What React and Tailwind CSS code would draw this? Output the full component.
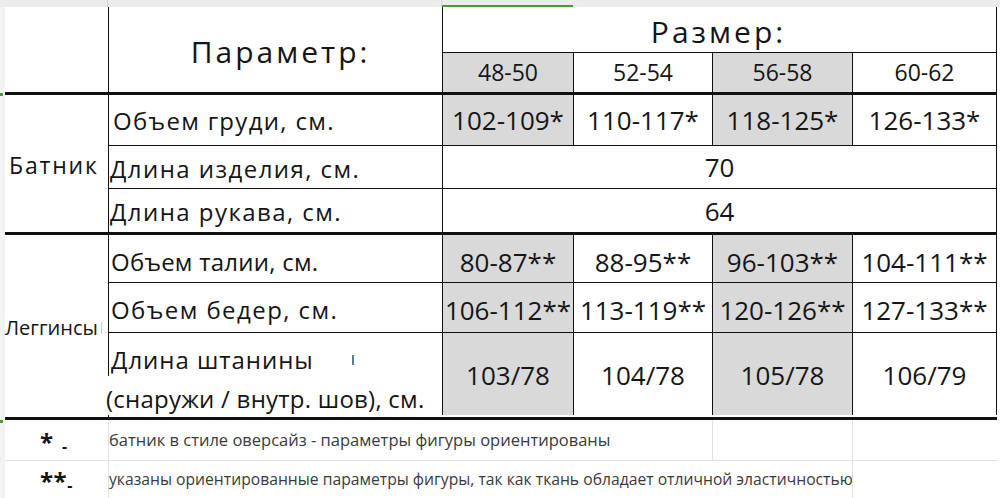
const font = { fontFamily: '"Open Sans", "Noto Sans", sans-serif' };

const sizeCols = [
  { w: 'w-[131px]', gray: true },
  { w: 'w-[139px]', gray: false },
  { w: 'w-[140px]', gray: true },
  { w: 'w-[144px]', gray: false },
];

function ValueRow({ values, h, border = true, align = 'items-center', text = 'text-[26px]' }) {
  return (
    <div className={`flex ${h}`}>
      {sizeCols.map((c, i) => (
        <div
          key={i}
          className={`${c.w} ${c.gray ? 'bg-[#d9d9d9]' : 'bg-white'} ${border ? 'border-b' : ''} border-r border-[#111] flex justify-center ${align} ${text} leading-none text-[#151515] whitespace-nowrap`}
        >
          {values[i]}
        </div>
      ))}
    </div>
  );
}

function LabelCell({ children, h, border = true, className = '' }) {
  return (
    <div className={`w-[334px] ${h} ${border ? 'border-b' : ''} border-r border-[#111] flex items-center text-[24px] leading-none text-[#151515] whitespace-nowrap ${className}`}>
      {children}
    </div>
  );
}

export default function App() {
  return (
    <div className="w-[1000px] h-[498px] bg-white overflow-hidden" style={font}>
      {/* spreadsheet column header strip */}
      <div className="h-[7px] flex bg-[#ececec]">
        <div className="w-[108px] border-r border-[#d4d4d4]" />
        <div className="w-[334px] border-r border-[#d4d4d4]" />
        <div className="w-[131px] flex flex-col justify-end">
          <div className="h-[2px] bg-[#4f9a35]" />
        </div>
      </div>

      <div className="flex">
        <div className="w-[5px] bg-[#f2f2f2] flex flex-col">
          <div className="h-[86px]" />
          <div className="w-[3px] h-[3px] bg-[#4f9a35]" />
          <div className="h-[324px]" />
          <div className="w-[3px] h-[3px] bg-[#4f9a35]" />
        </div>
        <div className="flex flex-col">
          {/* header */}
          <div className="flex h-[88px] border-b-[3px] border-[#111]">
            <div className="w-[104px] border-r border-[#111]" />
            <div className="w-[334px] border-r border-[#111] flex items-center justify-center pt-[4px] pl-[10px] text-[30px] tracking-[0.1em] leading-none text-[#151515]">
              Параметр:
            </div>
            <div className="flex flex-col">
              <div className="h-[46px] border-b border-r border-[#111] flex items-center justify-center pt-[4px] pr-[2px] text-[30px] tracking-[0.1em] leading-none text-[#151515]">
                Размер:
              </div>
              <ValueRow values={['48-50', '52-54', '56-58', '60-62']} h="h-[39px]" border={false} text="text-[23px]" />
            </div>
          </div>

          {/* Батник */}
          <div className="flex h-[140px] border-b-[3px] border-[#111]">
            <div className="w-[104px] border-r border-[#111] flex items-center pl-[4px] pt-[3px] text-[23px] tracking-[0.08em] leading-none text-[#151515]">
              Батник
            </div>
            <div className="flex flex-col">
              <div className="flex">
                <LabelCell h="h-[51px]" className="pl-[4px] pt-[2px] tracking-[0.055em]">Объем груди, см.</LabelCell>
                <ValueRow values={['102-109*', '110-117*', '118-125*', '126-133*']} h="h-[51px]" />
              </div>
              <div className="flex">
                <LabelCell h="h-[43px]" className="pl-[1px] pt-[4px] tracking-[0.06em]">Длина изделия, см.</LabelCell>
                <div className="w-[554px] h-[43px] border-b border-r border-[#111] flex items-center justify-center text-[26px] leading-none text-[#151515]">70</div>
              </div>
              <div className="flex">
                <LabelCell h="h-[43px]" border={false} className="pl-[1px] pt-[3px] tracking-[0.06em]">Длина рукава, см.</LabelCell>
                <div className="w-[554px] h-[43px] border-r border-[#111] flex items-center justify-center text-[26px] leading-none text-[#151515]">64</div>
              </div>
            </div>
          </div>

          {/* Леггинсы */}
          <div className="flex h-[185px] border-b-[3px] border-[#111]">
            <div className="w-[104px] border-r border-[#111] flex items-center pt-[3px] text-[20px] leading-none text-[#151515]">
              Леггинсы
              <span className="ml-[3px] w-[1px] h-[12px] bg-[#c8c8c8]" />
            </div>
            <div className="flex flex-col">
              <div className="flex">
                <LabelCell h="h-[48px]" className="pl-[2px] pt-[7px] text-[22px] tracking-[0.01em]">Объем талии, см.</LabelCell>
                <ValueRow values={['80-87**', '88-95**', '96-103**', '104-111**']} h="h-[48px]" align="items-center pt-[6px]" />
              </div>
              <div className="flex">
                <LabelCell h="h-[50px]" className="pl-[2px] pt-[5px] tracking-[0.06em]">Объем бедер, см.</LabelCell>
                <ValueRow values={['106-112**', '113-119**', '120-126**', '127-133**']} h="h-[50px]" align="items-center pt-[4px]" />
              </div>
              <div className="flex">
                <div className="w-[334px] h-[82px] border-r border-[#111] flex flex-col text-[24px] leading-none text-[#151515] whitespace-nowrap tracking-[0.04em]">
                  <div className="flex items-center h-[43px] pl-[2px] pt-[10px]">
                    Длина штанины
                    <span className="ml-[38px] w-[2px] h-[10px] bg-[#5b7b9c]" />
                  </div>
                  <div className="relative -ml-[3px] bg-white w-[300px] h-[39px] flex items-center pt-[6px] tracking-[0.01em]">
                    (снаружи / внутр. шов), см.
                  </div>
                </div>
                <ValueRow values={['103/78', '104/78', '105/78', '106/79']} h="h-[82px]" border={false} align="items-center pt-[2px]" />
              </div>
            </div>
          </div>

          {/* footnotes */}
          <div className="flex h-[41px] border-b border-[#e1e1e1]">
            <div className="w-[104px] border-r border-[#e1e1e1] flex items-center pl-[35px] pt-[4px] font-bold text-[#151515]">
              <span className="text-[24px] leading-none">*</span>
              <span className="text-[16px] leading-none ml-[9px] mt-[8px]">-</span>
            </div>
            <div className="w-[604px] border-r border-[#e1e1e1] flex items-center text-[16.5px] text-[#3a3a3a] whitespace-nowrap">
              батник в стиле оверсайз - параметры фигуры ориентированы
            </div>
            <div className="w-[140px] border-r border-[#e1e1e1]" />
          </div>
          <div className="flex h-[38px]">
            <div className="w-[104px] border-r border-[#e1e1e1] flex items-center pl-[35px] pt-[2px] font-bold text-[#151515]">
              <span className="text-[24px] leading-none tracking-[0.02em]">**</span>
              <span className="text-[16px] leading-none mt-[8px]">-</span>
            </div>
            <div className="w-[604px] flex items-center text-[15.7px] text-[#3a3a3a] whitespace-nowrap">
              указаны ориентированные параметры фигуры, так как ткань обладает отличной эластичностью
            </div>
            <div className="w-[140px] border-r border-[#e1e1e1]" />
          </div>
        </div>
      </div>
    </div>
  );
}
